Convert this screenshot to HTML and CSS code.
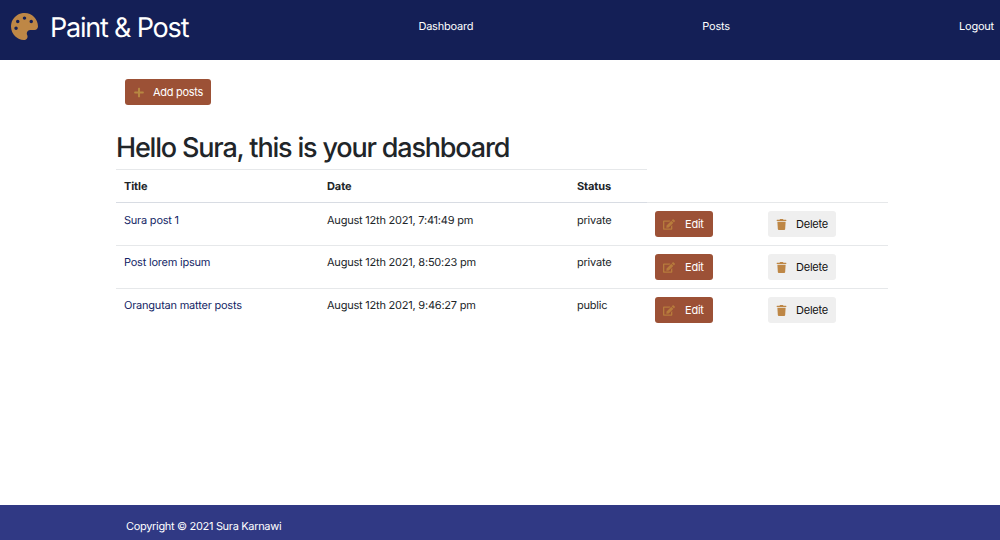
FILE: index.html
```html
<!DOCTYPE html>
<html lang="en">
<head>
<meta charset="utf-8">
<title>Paint &amp; Post</title>
<link rel="stylesheet" href="styles.css">
</head>
<body>
<svg class="sprite" width="0" height="0">
  <symbol id="edit" viewBox="0 0 576 512"><path d="M402.6 83.2l90.2 90.2c3.8 3.8 3.8 10 0 13.8L274.4 405.6l-92.8 10.3c-12.4 1.4-22.9-9.1-21.5-21.5l10.3-92.8L388.8 83.2c3.8-3.8 10-3.8 13.8 0zm162-22.9l-48.8-48.8c-15.2-15.2-39.9-15.2-55.2 0l-35.4 35.4c-3.8 3.8-3.8 10 0 13.8l90.2 90.2c3.8 3.8 10 3.8 13.8 0l35.4-35.4c15.2-15.3 15.2-40 0-55.2zM384 346.2V448H64V128h229.8c3.2 0 6.2-1.3 8.5-3.5l40-40c7.6-7.6 2.2-20.5-8.5-20.5H48C21.5 64 0 85.5 0 112v352c0 26.5 21.5 48 48 48h352c26.5 0 48-21.5 48-48V306.2c0-10.7-12.9-16-20.5-8.5l-40 40c-2.2 2.3-3.5 5.3-3.5 8.5z"/></symbol>
  <symbol id="trash" viewBox="0 0 448 512"><path d="M432 32H312l-9.4-18.7A24 24 0 0 0 281.1 0H166.8a23.72 23.72 0 0 0-21.4 13.3L136 32H16A16 16 0 0 0 0 48v32a16 16 0 0 0 16 16h416a16 16 0 0 0 16-16V48a16 16 0 0 0-16-16zM53.2 467a48 48 0 0 0 47.9 45h245.8a48 48 0 0 0 47.9-45L416 128H32z"/></symbol>
</svg>
<header class="navbar">
  <a class="brand">
    <svg class="palette" viewBox="0 0 512 512"><path d="M204.3 5C104.9 24.4 24.8 104.3 5.2 203.4c-37 187 131.7 326.4 258.8 306.7 41.2-6.4 61.4-54.6 42.5-91.7-23.1-45.4 9.9-98.4 60.9-98.4h79.7c35.8 0 64.8-29.6 64.9-65.3C511.5 97.1 368.1-26.9 204.3 5zM96 320c-17.7 0-32-14.3-32-32s14.3-32 32-32 32 14.3 32 32-14.3 32-32 32zm32-128c-17.7 0-32-14.3-32-32s14.3-32 32-32 32 14.3 32 32-14.3 32-32 32zm128-64c-17.7 0-32-14.3-32-32s14.3-32 32-32 32 14.3 32 32-14.3 32-32 32zm128 64c-17.7 0-32-14.3-32-32s14.3-32 32-32 32 14.3 32 32-14.3 32-32 32z"/></svg>
    <span class="brand-name">Paint &amp; Post</span>
  </a>
  <a class="nav-link nav-first">Dashboard</a>
  <a class="nav-link">Posts</a>
  <a class="nav-link">Logout</a>
</header>
<main class="container">
  <button class="btn btn-primary btn-add"><svg class="icon icon-plus" viewBox="0 0 448 512"><path d="M416 208H272V64c0-17.67-14.33-32-32-32h-32c-17.67 0-32 14.33-32 32v144H32c-17.67 0-32 14.33-32 32v32c0 17.67 14.33 32 32 32h144v144c0 17.67 14.33 32 32 32h32c17.67 0 32-14.33 32-32V304h144c17.67 0 32-14.33 32-32v-32c0-17.67-14.33-32-32-32z"/></svg>Add posts</button>
  <h1 class="title">Hello Sura, this is your dashboard</h1>
  <table class="posts">
    <colgroup><col class="col-title"><col class="col-date"><col class="col-status"><col class="col-edit"><col class="col-delete"></colgroup>
    <thead><tr><th>Title</th><th>Date</th><th>Status</th></tr></thead>
    <tbody>
      <tr><td><a class="post-link">Sura post 1</a></td><td>August 12th 2021, 7:41:49 pm</td><td>private</td>
        <td><button class="btn btn-primary btn-edit"><svg class="icon icon-edit"><use href="#edit"/></svg>Edit</button></td>
        <td><button class="btn btn-light"><svg class="icon icon-trash"><use href="#trash"/></svg>Delete</button></td></tr>
      <tr><td><a class="post-link">Post lorem ipsum</a></td><td>August 12th 2021, 8:50:23 pm</td><td>private</td>
        <td><button class="btn btn-primary btn-edit"><svg class="icon icon-edit"><use href="#edit"/></svg>Edit</button></td>
        <td><button class="btn btn-light"><svg class="icon icon-trash"><use href="#trash"/></svg>Delete</button></td></tr>
      <tr><td><a class="post-link">Orangutan matter posts</a></td><td>August 12th 2021, 9:46:27 pm</td><td>public</td>
        <td><button class="btn btn-primary btn-edit"><svg class="icon icon-edit"><use href="#edit"/></svg>Edit</button></td>
        <td><button class="btn btn-light"><svg class="icon icon-trash"><use href="#trash"/></svg>Delete</button></td></tr>
    </tbody>
  </table>
</main>
<footer class="footer">Copyright © 2021 Sura Karnawi</footer>
</body>
</html>
```
FILE: styles.css
```css
* { box-sizing: border-box; }
body {
  margin: 0;
  height: 540px;
  overflow: hidden;
  display: flex;
  flex-direction: column;
  background: #fff;
  color: #212529;
  font: 11px/17px Inter, "Liberation Sans", sans-serif;
  letter-spacing: -0.22px;
  text-rendering: geometricPrecision;
}
.sprite { display: none; }
.navbar {
  height: 60px;
  flex: none;
  display: flex;
  justify-content: space-between;
  align-items: flex-start;
  padding: 0 6px 0 10.5px;
  background: #141f56;
  color: #fff;
}
.brand { display: flex; align-items: center; height: 53px; }
.palette { width: 27px; height: 27px; margin-right: 12.5px; fill: #be8746; }
.brand-name { padding-top: 2px; font-size: 27px; line-height: 40px; letter-spacing: -1.2px; }
.nav-link { padding-top: 18px; }
.nav-first { padding-left: 1px; }
.container { width: 772px; margin: 0 0 0 116px; flex: 1; }
.btn {
  display: flex;
  align-items: center;
  height: 26px;
  padding: 0 9px;
  border: 0;
  border-radius: 3px;
  font: inherit;
  letter-spacing: inherit;
  white-space: nowrap;
}
.btn-primary { background: #9c5136; color: #fff; }
.btn-light { width: 68px; padding: 0 8px; background: #efefef; color: #111; }
.btn-edit { width: 58px; padding: 0 8px; }
.btn-add { width: 86px; margin: 19px 0 0 9px; letter-spacing: -0.3px; }
.icon { flex: none; height: 11px; fill: #be8746; }
.icon-plus { width: 10px; margin-right: 9px; fill: #b78741; }
.icon-edit { width: 12px; margin-right: 10px; fill: #b77b3c; }
.icon-trash { width: 11px; margin-right: 9px; }
.title {
  margin: 27px 0 5px;
  font-size: 27px;
  line-height: 32px;
  font-weight: 500;
  letter-spacing: -1.18px;
}
.posts { width: 772px; table-layout: fixed; border-collapse: separate; border-spacing: 0; }
.col-title { width: 203px; }
.col-date { width: 250px; }
.col-status { width: 78px; }
.col-edit { width: 113px; }
.col-delete { width: 128px; }
.posts th, .posts td {
  padding: 8px 8px 0;
  border-top: 1px solid #e6e8ea;
  text-align: left;
  vertical-align: top;
}
.posts th { height: 33px; font-weight: 700; letter-spacing: -0.1px; }
.posts td { height: 43px; }
.posts tbody tr:first-child td:nth-child(-n+3) { border-top-color: #d8dce3; }
.posts tbody tr:first-child td:nth-child(-n+3) { padding-top: 9px; }
.post-link { color: #141f66; }
.footer {
  height: 35px;
  flex: none;
  padding: 12.5px 126px 0;
  background: #303984;
  color: #fff;
  letter-spacing: -0.32px;
}
```
